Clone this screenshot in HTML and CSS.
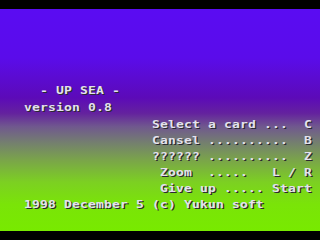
FILE: index.html
```html
<!DOCTYPE html>
<html>
<head>
<meta charset="utf-8">
<link rel="stylesheet" href="styles.css">
</head>
<body>
<div class="frame">
  <div class="screen">
    <div class="title">
      <p class="line logo">- UP SEA -</p>
      <p class="line">version 0.8</p>
    </div>
    <ul class="menu">
      <li class="line">Select a card ...  C</li>
      <li class="line">Cansel ..........  B</li>
      <li class="line">?????? ..........  Z</li>
      <li class="line"> Zoom  .....   L / R</li>
      <li class="line"> Give up ..... Start</li>
    </ul>
    <p class="line credit">1998 December 5 (c) Yukun soft</p>
  </div>
</div>
</body>
</html>
```
FILE: styles.css
```css
html, body {
  margin: 0;
  padding: 0;
  background: #000;
}
.frame {
  width: 320px;
  height: 240px;
  background: #000;
  padding-top: 9px;
  box-sizing: border-box;
  overflow: hidden;
}
.screen {
  height: 222px;
  box-sizing: border-box;
  padding: 74px 0 0 24px;
  background: linear-gradient(to bottom,
    #5a0cf2 0%,
    #5a0cea 22%,
    #5c0ab8 40%,
    #64229e 47%,
    #70588e 53%,
    #747e70 60%,
    #7aa44a 68%,
    #7cd022 78%,
    #7ae408 88%,
    #78ea00 100%);
  font-family: "DejaVu Sans Mono", "Liberation Mono", monospace;
  font-weight: bold;
  font-size: 10px;
  letter-spacing: 0.13px;
  line-height: 16px;
  color: #e4e2ee;
  text-shadow: 1px 1px 0 #2a2a30;
}
.title {
  margin: 0 0 1px 0;
}
.line {
  display: block;
  width: max-content;
  margin: 0;
  white-space: pre;
  transform: scaleX(1.3);
  transform-origin: 0 50%;
}
.logo {
  margin: 0 0 1px 16px;
}
.menu {
  list-style: none;
  margin: 0 0 0 128px;
  padding: 0;
}
.credit {
  margin: 0;
}
```
